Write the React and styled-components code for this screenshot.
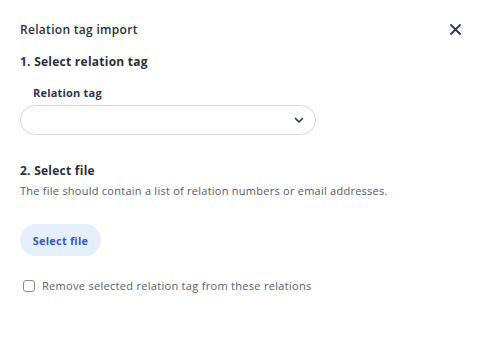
import React from 'react'
import styled, { createGlobalStyle } from 'styled-components'

const GlobalStyle = createGlobalStyle`
    body{
        margin: 0;
        background: #ffffff;
        font-family: "Open Sans", "Noto Sans", sans-serif;
    }
`;

const App = () => {
  return (
    <>
      <GlobalStyle />
      <DialogStyled>
        <Header>
          <Title>Relation tag import</Title>
          <CloseButton aria-label="Close">
            <svg width="11" height="11" viewBox="0 0 11 11">
              <path d="M1 1L10 10M10 1L1 10" stroke="#2f3a52" strokeWidth="1.8" strokeLinecap="round" />
            </svg>
          </CloseButton>
        </Header>
        <Step>1. Select relation tag</Step>
        <FieldLabel>Relation tag</FieldLabel>
        <Select>
          <svg width="10" height="7" viewBox="0 0 10 7">
            <path d="M1.5 1.5L5 5L8.5 1.5" stroke="#2f3a52" strokeWidth="1.7" fill="none" strokeLinecap="round" strokeLinejoin="round" />
          </svg>
        </Select>
        <Step $gap={27}>2. Select file</Step>
        <Hint>The file should contain a list of relation numbers or email addresses.</Hint>
        <FileButton>Select file</FileButton>
        <Check>
          <Box />
          Remove selected relation tag from these relations
        </Check>
      </DialogStyled>
    </>
  )
}

const DialogStyled = styled.div`
    width: 488px;
    height: 348px;
    box-sizing: border-box;
    padding: 21px 20px 0 20px;
    display: flex;
    flex-direction: column;
    align-items: flex-start;
    color: #2b2f3a;
`;

const Header = styled.div`
    width: 100%;
    display: flex;
    justify-content: space-between;
    align-items: center;
`;

const Title = styled.h1`
    margin: 0;
    font-size: 12px;
    font-weight: 600;
    line-height: 17px;
    letter-spacing: 0.3px;
    color: #2b2f3a;
`;

const CloseButton = styled.button`
    border: none;
    background: none;
    padding: 0;
    margin-right: 7px;
    display: flex;
    cursor: pointer;
`;

const Step = styled.h2`
    margin: ${p => p.$gap || 15}px 0 0 0;
    font-size: 12px;
    font-weight: 700;
    line-height: 17px;
    letter-spacing: 0.25px;
    color: #2b2f3a;
`;

const FieldLabel = styled.label`
    margin: 15px 0 0 13px;
    font-size: 11px;
    font-weight: 700;
    line-height: 16px;
    letter-spacing: 0.2px;
    color: #2c3550;
`;

const Select = styled.div`
    margin-top: 4px;
    width: 296px;
    height: 30px;
    box-sizing: border-box;
    border: 1px solid #d6d6d9;
    border-radius: 15px;
    display: flex;
    justify-content: flex-end;
    align-items: center;
    padding-right: 11px;
`;

const Hint = styled.p`
    margin: 4px 0 0 0;
    font-size: 11px;
    line-height: 15px;
    letter-spacing: 0.25px;
    color: #555a66;
`;

const FileButton = styled.button`
    margin-top: 26px;
    width: 81px;
    height: 32px;
    border: none;
    border-radius: 16px;
    background: #e6f0fd;
    color: #3b55c9;
    font-family: inherit;
    font-size: 11px;
    font-weight: 700;
    letter-spacing: 0.2px;
    cursor: pointer;
`;

const Check = styled.label`
    margin: 22px 0 0 3px;
    display: flex;
    align-items: center;
    gap: 7px;
    font-size: 11px;
    line-height: 15px;
    letter-spacing: 0.3px;
    color: #5a5e68;
`;

const Box = styled.span`
    width: 12px;
    height: 12px;
    border: 1.5px solid #8a8d96;
    border-radius: 3px;
    box-sizing: border-box;
`;

export default App
